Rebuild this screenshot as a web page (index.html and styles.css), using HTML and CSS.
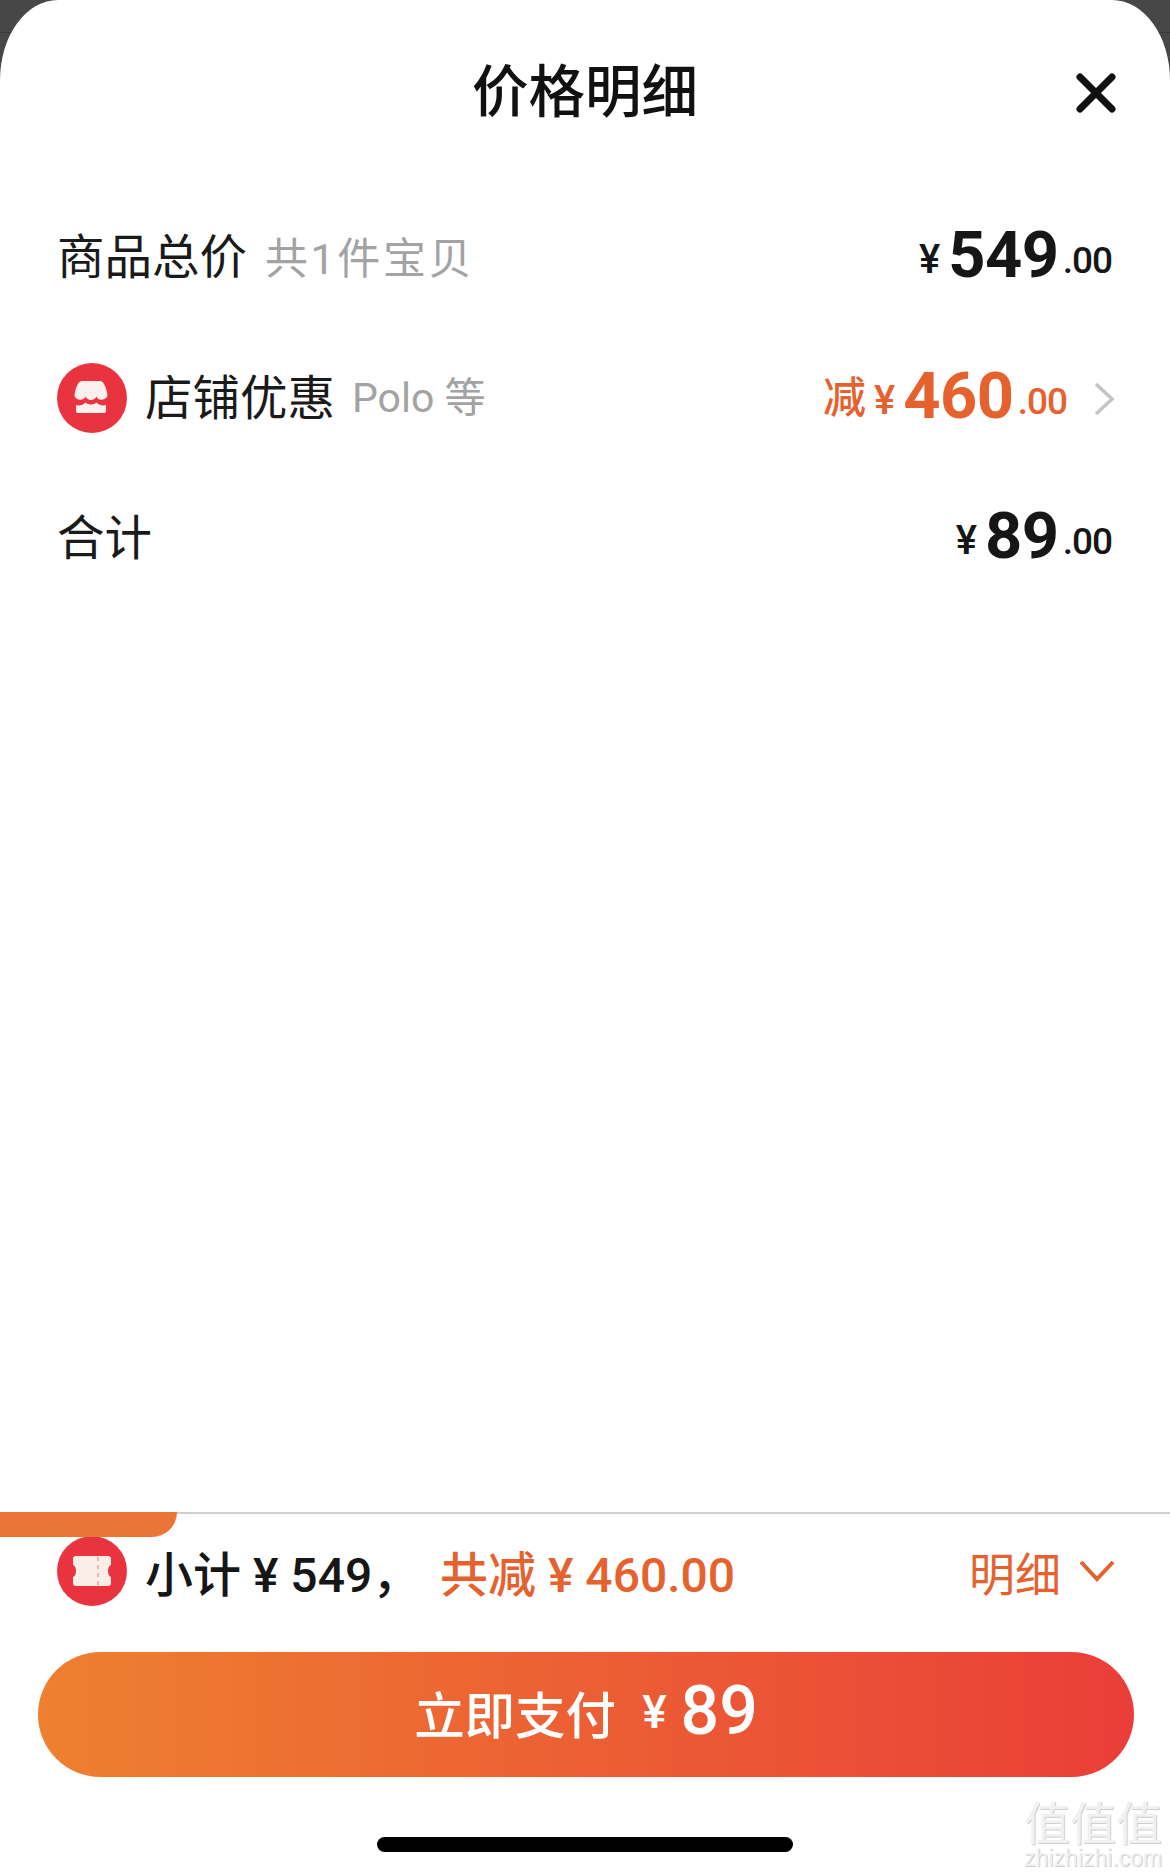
FILE: index.html
```html
<!DOCTYPE html>
<html lang="zh-CN">
<head>
    <meta charset="UTF-8">
    <title>价格明细</title>
    <link rel="stylesheet" href="styles.css">
</head>
<body>

<div class="sheet">
    <div class="header">
        <h2 class="title">价格明细</h2>
        <svg class="close" viewBox="0 0 40 40" width="40" height="40">
            <path d="M4 4 L36 36 M36 4 L4 36" stroke="#111" stroke-width="7" stroke-linecap="round" fill="none"/>
        </svg>
    </div>

    <div class="row">
        <span class="label">商品总价</span>
        <span class="hint count">共1件宝贝</span>
        <span class="price">
            <span class="yen">¥</span><span class="big">549</span><span class="cents">.00</span>
        </span>
    </div>

    <div class="row">
        <span class="badge">
            <svg viewBox="0 0 70 70" width="70" height="70">
                <path d="M25 18 H43 C47 18 50 26 50.5 33 C48 38 41 38 39.5 33.5 C37.5 38 30.5 38 28.5 33.5 C26.5 38 19.5 38 17.5 33 C18 26 21 18 25 18 Z" fill="#fdf0ec"/>
                <path d="M19 42 C22 43 26 42 28.5 39.5 C31 42 37 42 39.5 39.5 C42 42 46 43 49 42 V48 C49 49.5 48 50 47 50 H21 C20 50 19 49.5 19 48 Z" fill="#fdf0ec"/>
            </svg>
        </span>
        <span class="label">店铺优惠</span>
        <span class="hint">Polo 等</span>
        <span class="price orange">
            <span class="minus">减</span><span class="yen">¥</span><span class="big">460</span><span class="cents">.00</span>
            <svg class="more" viewBox="0 0 22 34" width="22" height="34">
                <path d="M3 2 L19 17 L3 32" stroke="#c4c4c4" stroke-width="3.5" fill="none"/>
            </svg>
        </span>
    </div>

    <div class="row">
        <span class="label">合计</span>
        <span class="price">
            <span class="yen">¥</span><span class="big">89</span><span class="cents">.00</span>
        </span>
    </div>

    <div class="footer">
        <div class="tab"></div>
        <div class="summary">
            <span class="badge">
                <svg viewBox="0 0 70 70" width="70" height="70">
                    <path d="M19 20 H51 C53 20 54 21 54 23 V29 C50 30 50 40 54 41 V47 C54 49 53 50 51 50 H19 C17 50 16 49 16 47 V41 C20 40 20 30 16 29 V23 C16 21 17 20 19 20 Z" fill="#fbeee9"/>
                    <path d="M41 21 V49" stroke="#f0b5ae" stroke-width="2" stroke-dasharray="4 4"/>
                </svg>
            </span>
            <span class="subtotal">小计 ¥ 549，</span>
            <span class="discount">共减 ¥ 460.00</span>
            <span class="detail">明细
                <svg viewBox="0 0 36 24" width="36" height="24">
                    <path d="M2 3 L18 20 L34 3" stroke="#e5622e" stroke-width="4" fill="none"/>
                </svg>
            </span>
        </div>
        <button type="button" class="pay">
            <span class="pay-text">立即支付</span><span class="pay-yen">¥</span><span class="pay-num">89</span>
        </button>
        <div class="home-bar"></div>
    </div>

    <div class="watermark">
        <span class="mark-zh">值值值</span>
        <span class="mark-en">zhizhizhi.com</span>
    </div>
</div>

</body>
</html>
```

FILE: styles.css
```css
html, body {
    margin: 0;
    padding: 0;
}
body {
    width: 1170px;
    height: 1876px;
    overflow: hidden;
    background: linear-gradient(#474747 0, #474747 32px, #3a3a3a 32px, #3a3a3a 33px, #474747 33px);
    font-family: Roboto, "Noto Sans CJK SC", sans-serif;
    color: #111;
}
.sheet {
    position: relative;
    display: flex;
    flex-direction: column;
    height: 1876px;
    background: #fff;
    border-radius: 58px 58px 0 0 / 80px 80px 0 0;
}
.header {
    display: flex;
    align-items: center;
    justify-content: center;
    position: relative;
    height: 184px;
    padding-bottom: 3px;
}
.title {
    margin: 0 0 10px;
    font-family: "Noto Sans CJK SC", sans-serif;
    font-size: 56.5px;
    font-weight: 500;
    line-height: 64px;
}
.close {
    position: absolute;
    right: 54px;
    top: 73px;
}
.row {
    display: flex;
    align-items: center;
    height: 140.5px;
    padding: 0 58px 0 57px;
}
.label {
    margin-bottom: 6px;
    font-family: "Noto Sans CJK SC", sans-serif;
    font-size: 47.5px;
    line-height: 60px;
    color: #1a1a1a;
}
.hint {
    margin-left: 17px;
    font-family: Roboto, "Noto Sans CJK SC", sans-serif;
    font-size: 41px;
    line-height: 60px;
    color: #a3a3a3;
}
.count {
    margin-top: 3px;
    margin-left: 18px;
    font-size: 43px;
    letter-spacing: 2.6px;
}
.badge {
    display: block;
    flex: none;
    width: 70px;
    height: 70px;
    margin-right: 18px;
    border-radius: 50%;
    background: #e9343f;
}
.badge svg {
    display: block;
}
.price {
    margin-left: auto;
    margin-top: 12px;
    color: #161616;
    font-weight: 700;
    line-height: 70px;
    white-space: nowrap;
}
.yen {
    margin-right: 8px;
    font-size: 40px;
    font-weight: 500;
    vertical-align: 4px;
}
.big {
    font-size: 65px;
    letter-spacing: -0.5px;
}
.cents {
    margin-left: 4px;
    font-size: 37px;
    font-weight: 500;
    letter-spacing: -1px;
    vertical-align: 4px;
}
.orange {
    color: #e5622e;
    margin-right: -3px;
}
.minus {
    margin-right: 8px;
    font-family: "Noto Sans CJK SC", sans-serif;
    font-size: 43px;
    font-weight: 500;
    vertical-align: 5px;
}
.more {
    margin-left: 22px;
    vertical-align: 2px;
}
.footer {
    position: relative;
    margin-top: auto;
    border-top: 2px solid #cfcfcf;
    height: 364px;
    box-sizing: border-box;
}
.tab {
    position: absolute;
    left: 0;
    top: -2px;
    width: 177px;
    height: 25px;
    background: #ea7536;
    border-radius: 0 0 26px 0;
}
.summary {
    display: flex;
    align-items: center;
    height: 70px;
    margin-top: 22px;
    padding: 0 55px 0 57px;
}
.subtotal {
    font-family: Roboto, "Noto Sans CJK SC", sans-serif;
    font-size: 48px;
    font-weight: 500;
    color: #161616;
    width: 295px;
    white-space: nowrap;
}
.discount {
    font-size: 48px;
    font-weight: 500;
    color: #e5622e;
    white-space: nowrap;
}
.detail {
    display: flex;
    align-items: center;
    gap: 18px;
    margin-left: auto;
    font-family: "Noto Sans CJK SC", sans-serif;
    font-size: 46px;
    color: #e5622e;
}
.pay {
    display: flex;
    align-items: center;
    justify-content: center;
    width: 1096px;
    height: 125px;
    margin: 46px 0 0 38px;
    padding: 0 0 6px;
    border: none;
    border-radius: 63px;
    background: linear-gradient(90deg, #ee8030, #ea3e38);
    color: #fff;
    font-family: Roboto, "Noto Sans CJK SC", sans-serif;
}
.pay-text {
    font-family: "Noto Sans CJK SC", sans-serif;
    font-size: 50.5px;
    font-weight: 500;
}
.pay-yen {
    margin: 0 14px 0 26px;
    font-size: 46px;
    font-weight: 500;
}
.pay-num {
    margin-bottom: 2px;
    font-size: 68px;
    font-weight: 500;
}
.home-bar {
    width: 416px;
    height: 15px;
    margin: 60px auto 0;
    border-radius: 8px;
    background: #000;
}
.watermark {
    position: absolute;
    right: 8px;
    bottom: 5px;
    display: flex;
    flex-direction: column;
    align-items: center;
    color: #f1f1f1;
    text-shadow: 1px 1px 0 #cfcfcf;
}
.mark-zh {
    font-family: "Noto Sans CJK SC", sans-serif;
    font-size: 46px;
    line-height: 50px;
}
.mark-en {
    font-family: "Liberation Sans", sans-serif;
    font-size: 23px;
    line-height: 26px;
}
```
